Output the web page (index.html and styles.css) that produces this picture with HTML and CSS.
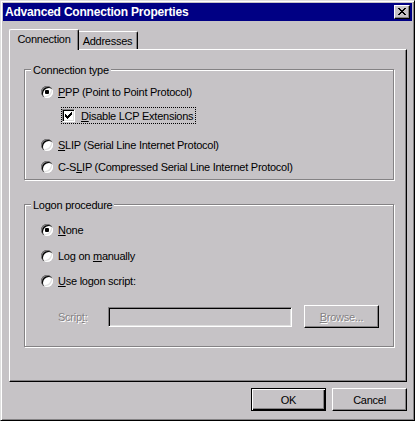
FILE: index.html
```html
<!DOCTYPE html>
<html lang="en">
<head>
    <meta charset="UTF-8">
    <title>Advanced Connection Properties</title>
    <link rel="stylesheet" href="styles.css">
</head>
<body>
<div class="window">
    <div class="titlebar">
        <span class="title">Advanced Connection Properties</span>
        <div class="close-btn">
            <svg width="8" height="7" viewBox="0 0 8 7" shape-rendering="crispEdges">
                <path d="M0 0h2v1H0zM6 0h2v1H6zM1 1h2v1H1zM5 1h2v1H5zM2 2h4v1H2zM3 3h2v1H3zM2 4h4v1H2zM1 5h2v1H1zM5 5h2v1H5zM0 6h2v1H0zM6 6h2v1H6z" fill="#000"/>
            </svg>
        </div>
    </div>
    <div class="dialog-body">
        <div class="tabs">
            <div class="tab selected">Connection</div>
            <div class="tab">Addresses</div>
        </div>
        <div class="tab-panel">
            <!-- Connection type -->
            <div class="group group-connection">
                <div class="group-title">Connection type</div>
                <div class="option"><span class="radio checked"></span><span><u>P</u>PP (Point to Point Protocol)</span></div>
                <div class="check-row">
                    <span class="checkbox">
                        <svg width="7" height="7" viewBox="0 0 7 7" shape-rendering="crispEdges">
                            <path d="M6 0h1v1H6zM5 1h2v1H5zM0 2h1v1H0zM4 2h3v1H4zM0 3h2v1H0zM3 3h3v1H3zM0 4h5v1H0zM1 5h3v1H1zM2 6h1v1H2z" fill="#000"/>
                        </svg>
                    </span>
                    <span><u>D</u>isable LCP Extensions</span>
                </div>
                <div class="option slip"><span class="radio"></span><span><u>S</u>LIP (Serial Line Internet Protocol)</span></div>
                <div class="option cslip"><span class="radio"></span><span>C-S<u>L</u>IP (Compressed Serial Line Internet Protocol)</span></div>
            </div>
            <!-- Logon procedure -->
            <div class="group group-logon">
                <div class="group-title">Logon procedure</div>
                <div class="option"><span class="radio checked"></span><span><u>N</u>one</span></div>
                <div class="option manual"><span class="radio"></span><span>Log on <u>m</u>anually</span></div>
                <div class="option script"><span class="radio"></span><span><u>U</u>se logon script:</span></div>
                <div class="script-row">
                    <span class="script-label disabled">Scrip<u>t</u>:</span>
                    <div class="text-field"></div>
                    <div class="btn browse-btn disabled"><u>B</u>rowse...</div>
                </div>
            </div>
        </div>
        <div class="buttons">
            <div class="btn default">OK</div>
            <div class="btn">Cancel</div>
        </div>
    </div>
</div>
</body>
</html>
```

FILE: styles.css
```css
body {
    margin: 0;
    font-family: "Liberation Sans", Arial, sans-serif;
    font-size: 11px;
    letter-spacing: -0.25px;
    white-space: nowrap;
    color: #000;
}

.window {
    box-sizing: border-box;
    width: 415px;
    height: 421px;
    padding: 2px;
    background: #c6c3c6;
    border: 1px solid;
    border-color: #dfdfdf #000 #000 #dfdfdf;
    box-shadow: inset 1px 1px #fff, inset -1px -1px #848284;
}

.titlebar {
    height: 18px;
    background: #000084;
    display: flex;
    align-items: center;
    justify-content: space-between;
    padding: 0 2px 0 2px;
}

.title {
    color: #fff;
    font-weight: bold;
    font-size: 12px;
    letter-spacing: -0.2px;
}

.close-btn {
    box-sizing: border-box;
    width: 16px;
    height: 14px;
    background: #c6c3c6;
    border: 1px solid;
    border-color: #fff #000 #000 #fff;
    box-shadow: inset -1px -1px #848284;
    display: flex;
    align-items: center;
    justify-content: center;
    padding: 0 1px 1px 0;
}

.close-btn svg {
    display: block;
}

.dialog-body {
    padding: 8px 5px 0 6px;
}

/* Tabs */
.tabs {
    display: flex;
    align-items: flex-end;
    height: 20px;
}

.tab {
    box-sizing: border-box;
    height: 18px;
    width: 61px;
    border-top: 1px solid #fff;
    border-left: 1px solid #fff;
    border-right: 1px solid #000;
    border-radius: 2px 2px 0 0;
    box-shadow: inset -1px 0 #848284;
    text-align: center;
    line-height: 14px;
    padding-top: 2px;
}

.tab.selected {
    position: relative;
    z-index: 1;
    width: 70px;
    height: 21px;
    margin-bottom: -1px;
    margin-right: -2px;
    background: #c6c3c6;
    padding-top: 2px;
}

.tab-panel {
    box-sizing: border-box;
    width: 398px;
    height: 333px;
    border: 1px solid;
    border-color: #fff #000 #000 #fff;
    box-shadow: inset -1px -1px #848284;
    padding: 19px 0 0 14px;
}

/* Group boxes */
.group {
    position: relative;
    box-sizing: border-box;
    width: 370px;
    border: 1px solid #848284;
    box-shadow: inset 1px 1px #fff, 1px 1px #fff;
    padding-left: 16px;
}

.group-connection {
    height: 111px;
    padding-top: 15px;
}

.group-logon {
    height: 143px;
    margin-top: 24px;
    padding-top: 18px;
}

.group-title {
    position: absolute;
    top: -7px;
    left: 6px;
    padding: 0 2px;
    line-height: 14px;
    background: #c6c3c6;
}

.option {
    display: flex;
    align-items: center;
    height: 14px;
    line-height: 14px;
}

.option.slip {
    margin-top: 14px;
}

.option.cslip {
    margin-top: 8px;
}

.option.manual {
    margin-top: 12px;
}

.option.script {
    margin-top: 11px;
}

.radio {
    position: relative;
    width: 12px;
    height: 12px;
    border-radius: 50%;
    background: #fff;
    box-shadow: inset 1px 1px #848284, inset 2px 2px #000, inset -1px -1px #fff, inset -2px -2px #dfdfdf;
    margin-right: 5px;
    flex: none;
}

.radio.checked::after {
    content: "";
    position: absolute;
    left: 4px;
    top: 4px;
    width: 4px;
    height: 4px;
    border-radius: 1px;
    background: #000;
}

.check-row {
    display: flex;
    align-items: center;
    box-sizing: border-box;
    height: 17px;
    width: 135px;
    margin: 8px 0 0 20px;
    border: 1px dotted #000;
    line-height: 14px;
}

.checkbox {
    box-sizing: border-box;
    width: 13px;
    height: 13px;
    margin-right: 6px;
    flex: none;
    background: #fff;
    border: 1px solid;
    border-color: #848284 #fff #fff #848284;
    box-shadow: inset 1px 1px #000, inset -1px -1px #dfdfdf;
    display: flex;
    align-items: center;
    justify-content: center;
}

.checkbox svg {
    display: block;
}

/* Script row */
.script-row {
    display: flex;
    align-items: center;
    height: 23px;
    margin: 17px 0 0 17px;
}

.script-label {
    width: 50px;
}

.text-field {
    box-sizing: border-box;
    width: 184px;
    height: 20px;
    margin-top: 1px;
    border: 1px solid;
    border-color: #848284 #fff #fff #848284;
    box-shadow: inset 1px 1px #000, inset -1px -1px #dfdfdf;
}

.disabled {
    color: #848284;
    text-shadow: 1px 1px 0 #fff;
}

/* Buttons */
.btn {
    box-sizing: border-box;
    width: 75px;
    height: 23px;
    border: 1px solid;
    border-color: #fff #000 #000 #fff;
    box-shadow: inset -1px -1px #848284;
    display: flex;
    align-items: center;
    justify-content: center;
    line-height: 14px;
}

.browse-btn {
    margin-left: 12px;
}

.btn.default {
    border-color: #000;
    box-shadow: inset 1px 1px #fff, inset -1px -1px #000, inset -2px -2px #848284;
}

.buttons {
    display: flex;
    justify-content: flex-end;
    gap: 6px;
    margin-top: 6px;
    width: 398px;
}
```
